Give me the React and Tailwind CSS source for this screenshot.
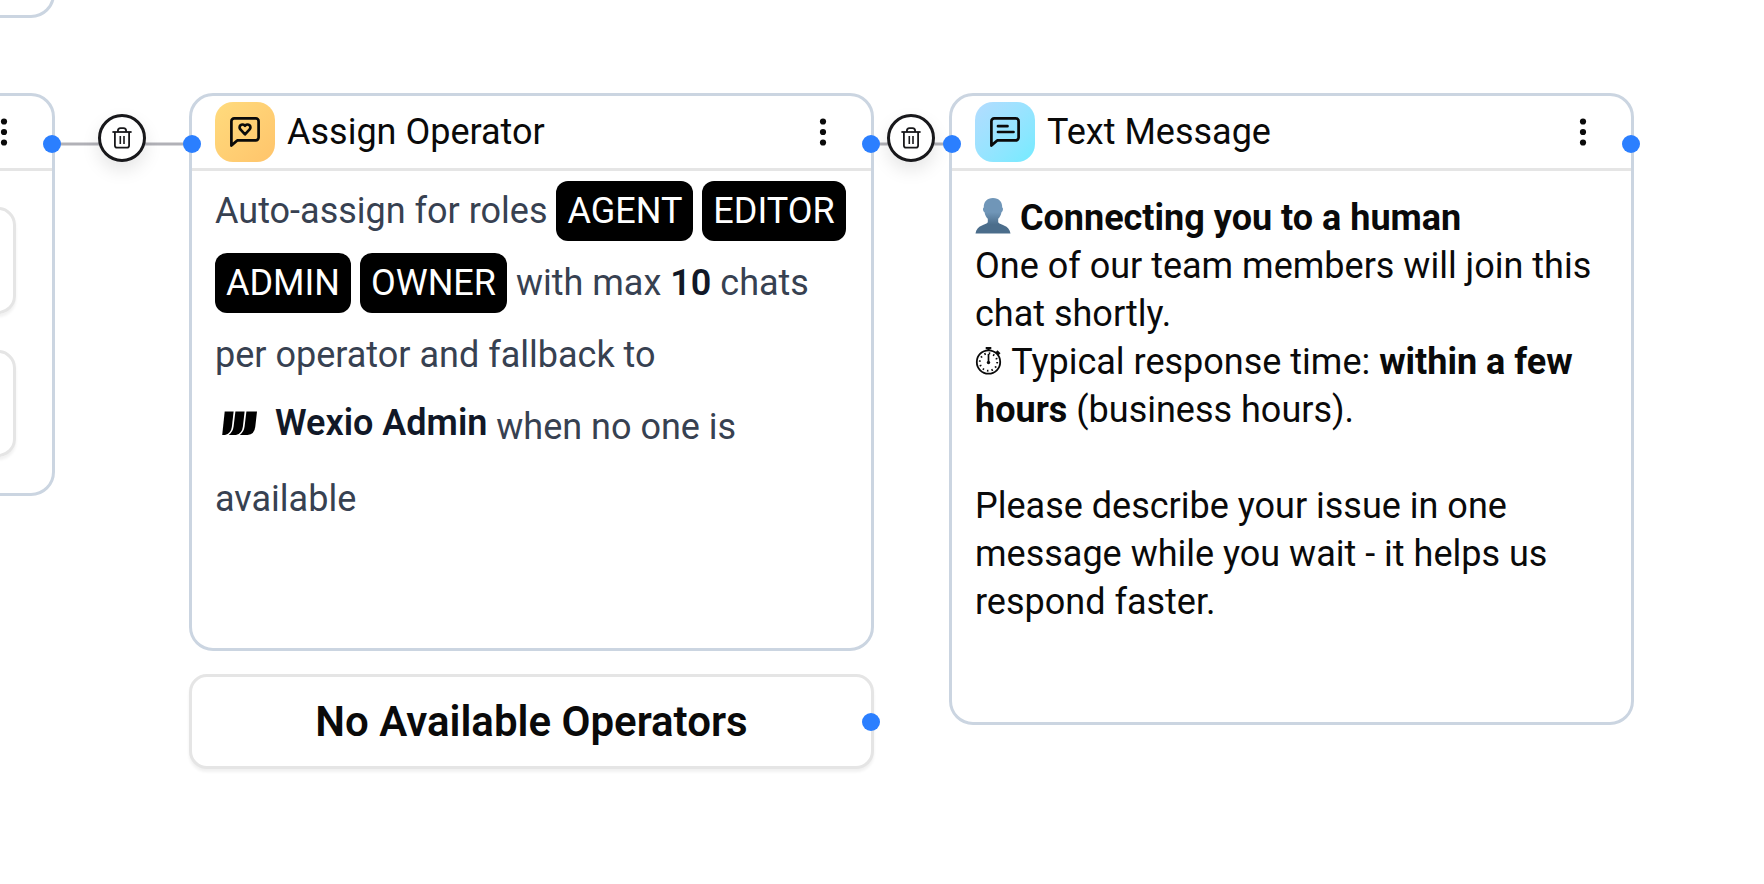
import React from 'react';
import clsx from 'clsx';

const nodeCard =
  'relative w-[685px] rounded-3xl border-[3px] border-[#cbd5e1] bg-white';

const MenuButton = () => (
  <button type="button" aria-label="Open node menu" className="flex h-12 w-12 items-center justify-center">
    <svg width="8" height="32" viewBox="0 0 8 32" fill="#0a0a0a">
      <circle cx="4" cy="5.5" r="3.1" />
      <circle cx="4" cy="16" r="3.1" />
      <circle cx="4" cy="26.5" r="3.1" />
    </svg>
  </button>
);

// Connection point, sits on the border of its node
const Handle = ({ className }) => (
  <span className={clsx('absolute z-10 h-[18px] w-[18px] rounded-full bg-[#2b7fff]', className)} />
);

const BubbleIcon = ({ children }) => (
  <svg
    width="36"
    height="36"
    viewBox="0 0 36 36"
    fill="none"
    stroke="#0a0a0a"
    strokeWidth="2.7"
    strokeLinecap="round"
    strokeLinejoin="round"
  >
    <path d="M4.4 31.6V7.2a2.8 2.8 0 0 1 2.8-2.8h21.6a2.8 2.8 0 0 1 2.8 2.8v16.4a2.8 2.8 0 0 1-2.8 2.8H10.2Z" />
    {children}
  </svg>
);

const AssignIcon = () => (
  <BubbleIcon>
    <path d="m18 20.3-4.600-4.900a2.900 2.900 0 0 1 4.200-4l.4.400.4-.4a2.900 2.900 0 0 1 4.200 4Z" />
  </BubbleIcon>
);

const TextIcon = () => (
  <BubbleIcon>
    <path d="M11 12.200h9.500M11 18h15.500" />
  </BubbleIcon>
);

const DeleteEdgeButton = ({ className }) => (
  <button
    type="button"
    aria-label="Delete connection"
    className={clsx(
      'absolute top-[114px] flex h-12 w-12 items-center justify-center rounded-full border-[3px] border-[#18181b] bg-white shadow-[0_8px_18px_rgba(0,0,0,0.1)]',
      className
    )}
  >
    <svg width="24" height="24" viewBox="0 0 24 24" fill="none" stroke="#18181b" strokeWidth="1.8" strokeLinejoin="round">
      <path d="M2.400 6h19.200" />
      <path d="M4.900 6v13.500a2.200 2.200 0 0 0 2.200 2.200h9.800a2.200 2.200 0 0 0 2.200-2.200V6" />
      <path d="M7.900 6V4.800A2.600 2.600 0 0 1 10.500 2.200h3a2.600 2.600 0 0 1 2.600 2.600V6" />
      <path d="M10.300 10v8M14 10v8" strokeWidth="1.600" />
    </svg>
  </button>
);

const NodeHeader = ({ title, icon, tile }) => (
  <header className="flex h-[75px] items-center gap-3 border-b-[3px] border-[#e5e5e5] pl-[23px] pr-6">
    {icon && (
      <span className={clsx('flex h-[60px] w-[60px] items-center justify-center rounded-[18px] bg-linear-to-br', tile)}>
        {icon}
      </span>
    )}
    <h2 className="flex-1 text-[36px] leading-[48px]">{title}</h2>
    <MenuButton />
  </header>
);

const Badge = ({ children }) => (
  <span className="inline-block rounded-xl bg-black px-[11px] leading-[60px] text-white">{children}</span>
);

const WexioLogo = () => (
  <svg width="48" height="48" viewBox="0 0 48 48" className="shrink-0" fill="#000">
    <path d="M9.700 12.500H18.600l-1.700 15Q16.100 34.500 10 36H7.200Z" />
    <path d="M20.400 12.500h9.200l-1.700 15Q27.100 34.500 21 36h-7.200Q17.900 33 18.600 27.500Z" />
    <path d="M31.400 12.500H42l-1.700 15Q39.500 35.500 32.500 36h-7.700Q28.900 33 29.600 27.500Z" />
  </svg>
);

const PersonIcon = () => (
  <svg role="img" aria-label="Person" width="36" height="36" viewBox="0 0 36 36" className="inline-block align-[-4px]">
    <defs>
      <linearGradient id="person" x1="0" y1="0" x2="0" y2="1">
        <stop offset="0.4" stopColor="#7096b8" />
        <stop offset="0.75" stopColor="#4b6d8b" />
      </linearGradient>
    </defs>
    <path
      fill="url(#person)"
      d="M18 0c6 0 9.500 4 9.200 9.500 1.300.5.9 4-.7 4.700-.6 3.300-2 5.300-3.300 6.600v3.400c1.500 2.800 11.300 2.500 12.300 11.300H.5C1.500 26.700 11.300 27 12.800 24.200v-3.400c-1.300-1.300-2.700-3.300-3.300-6.600-1.600-.7-2-4.200-.7-4.700C8.500 4 12 0 18 0Z"
    />
  </svg>
);

const StopwatchIcon = () => (
  <svg
    role="img"
    aria-label="Stopwatch"
    width="28"
    height="28"
    viewBox="0 0 28 28"
    fill="none"
    stroke="#0a0a0a"
    className="inline-block align-[-1px]"
  >
    <circle cx="13.5" cy="15" r="11.7" strokeWidth="1.8" />
    <circle cx="13.5" cy="15" r="8.7" strokeWidth="1.9" strokeDasharray="1.5 3.055" />
    <path d="M13.500 7v7" strokeWidth="1.7" />
    <circle cx="13.5" cy="15.5" r="1.7" fill="#0a0a0a" stroke="none" />
    <path d="M10.700 1.200h5.600M13.500 1v2.500" strokeWidth="2.2" />
    <path d="m21.500 4.300 3 3" strokeWidth="2.8" />
  </svg>
);

const OptionBox = () => (
  <div className="h-[107px] rounded-[18px] border-[3px] border-[#e5e5e5] shadow-[0_3px_3px_rgba(0,0,0,0.06)]" />
);

const App = () => {
  return (
    <main className="relative h-screen w-full overflow-hidden bg-white font-['Roboto',sans-serif] text-[#0a0a0a]">
      <svg className="absolute inset-0 h-full w-full" stroke="#b1b1b7" strokeWidth="3">
        <line x1="52" y1="144" x2="192" y2="144" />
        <line x1="871" y1="144" x2="951" y2="144" />
      </svg>

      {/* Nodes that run off the left side of the canvas */}
      <div className="absolute -left-[630px] -top-[100px] flex flex-col gap-[75px]">
        <section className={nodeCard}>
          <div className="h-28" />
        </section>
        <section className={nodeCard}>
          <NodeHeader />
          <div className="flex flex-col gap-9 px-9 py-9">
            <OptionBox />
            <OptionBox />
          </div>
          <Handle className="-right-[9px] top-[39px]" />
        </section>
      </div>

      <div className="absolute left-[189px] top-[93px] flex flex-col gap-[23px]">
        <section className={nodeCard}>
          <NodeHeader title="Assign Operator" icon={<AssignIcon />} tile="from-[#ffdb7d] to-[#ffc46b]" />
          <p className="pb-[113px] pl-[23px] pr-4 pt-1 text-[36px] leading-[72px] text-[#374151]">
            Auto-assign for roles <Badge>AGENT</Badge> <Badge>EDITOR</Badge> <Badge>ADMIN</Badge>{' '}
            <Badge>OWNER</Badge> with max <strong className="font-semibold text-[#111827]">10</strong> chats
            per operator and fallback to{' '}
            <span className="inline-flex items-center gap-3 align-[-8px] font-semibold leading-[48px] text-[#111827]">
              <WexioLogo />
              Wexio Admin
            </span>{' '}
            when no one is available
          </p>
          <Handle className="-left-[9px] top-[39px]" />
          <Handle className="-right-[9px] top-[39px]" />
        </section>
        <section className="relative rounded-[18px] border-[3px] border-[#e5e5e5] bg-white py-5 text-center shadow-[0_3px_3px_rgba(0,0,0,0.06)]">
          <h3 className="text-[42px] font-semibold leading-[49px]">No Available Operators</h3>
          <Handle className="-right-[9px] top-9" />
        </section>
      </div>

      <div className="absolute left-[949px] top-[93px]">
        <section className={nodeCard}>
          <NodeHeader title="Text Message" icon={<TextIcon />} tile="from-[#b3dcff] to-[#73ebff]" />
          <div className="px-[23px] pb-24 pt-[23px] text-[36px] leading-[48px]">
            <p>
              <PersonIcon /> <strong className="font-bold">Connecting you to a human</strong>
            </p>
            <p>One of our team members will join this chat shortly.</p>
            <p>
              <StopwatchIcon /> Typical response time: <strong className="font-bold">within a few hours</strong>{' '}
              (business hours).
            </p>
            <p className="mt-12">
              Please describe your issue in one message while you wait - it helps us respond faster.
            </p>
          </div>
          <Handle className="-left-[9px] top-[39px]" />
          <Handle className="-right-[9px] top-[39px]" />
        </section>
      </div>

      <DeleteEdgeButton className="left-[98px]" />
      <DeleteEdgeButton className="left-[887px]" />
    </main>
  );
};

export default App;
